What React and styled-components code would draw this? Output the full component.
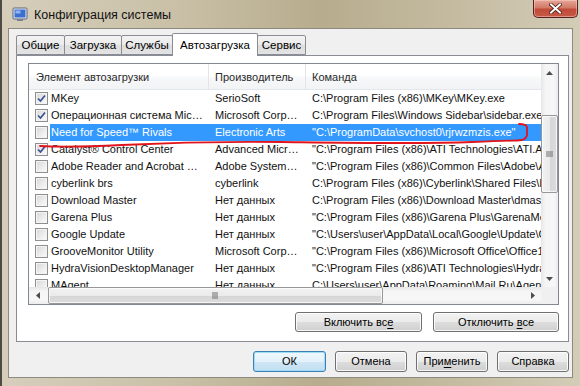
import React from 'react';
import styled, { createGlobalStyle } from 'styled-components';

const Global = createGlobalStyle`
  html, body { margin: 0; padding: 0; background: #c8bfa6; }
  body { font-family: "Liberation Sans", Arial, sans-serif; }
  * { box-sizing: border-box; }
`;

const Window = styled.div`
  position: relative;
  width: 580px;
  height: 386px;
  display: flex;
  flex-direction: column;
  background: linear-gradient(90deg, #d6cebb 0%, #c9c0a7 30%, #b7ac8d 55%, #c5bca2 80%, #d3ccb7 100%);
  border-left: 2px solid #4e4b45;
  overflow: hidden;
`;

const TitleBar = styled.div`
  height: 28px;
  flex: none;
  display: flex;
  align-items: center;
  padding-left: 10px;
  gap: 5px;
`;

const TitleText = styled.span`
  font-size: 12.5px;
  color: #111;
  margin-top: 1px;
`;

const CloseButton = styled.div`
  margin-left: auto;
  margin-right: 2px;
  align-self: flex-start;
  width: 45px;
  height: 18px;
  border: 1px solid #5a2020;
  border-top: none;
  border-radius: 0 0 5px 5px;
  background: linear-gradient(#e5a797 0%, #d37a68 45%, #c14a3a 55%, #c65a45 100%);
  box-shadow: inset 0 0 0 1px rgba(255, 220, 210, 0.45);
  display: flex;
  align-items: center;
  justify-content: center;
`;

const Client = styled.div`
  flex: 1;
  min-height: 0;
  margin: 0 7px 8px 6px;
  border: 1px solid #8d8a80;
  background: #f0f0f0;
  display: flex;
  flex-direction: column;
  padding: 4px 3px 5px 7px;
`;

const TabStrip = styled.div`
  height: 23px;
  flex: none;
  display: flex;
  align-items: flex-end;
  margin-bottom: -1px;
  position: relative;
  z-index: 1;
`;

const Tab = styled.div`
  width: ${p => p.$w}px;
  height: ${p => (p.$active ? 23 : 20)}px;
  margin-bottom: ${p => (p.$active ? 0 : 1)}px;
  margin-right: -1px;
  border: 1px solid #898c95;
  border-bottom: ${p => (p.$active ? 'none' : '1px solid #898c95')};
  border-radius: 2px 2px 0 0;
  background: ${p => (p.$active ? '#ffffff' : 'linear-gradient(#f3f3f3 0%, #ebebeb 50%, #dedede 51%, #e3e3e3 100%)')};
  position: relative;
  z-index: ${p => (p.$active ? 2 : 1)};
  font-size: 11.5px;
  color: #000;
  display: flex;
  align-items: center;
  justify-content: center;
  padding-bottom: ${p => (p.$active ? 1 : 0)}px;
`;

const Panel = styled.div`
  flex: 1;
  min-height: 0;
  background: #ffffff;
  border: 1px solid #898c95;
  display: flex;
  flex-direction: column;
  padding: 7px 9px 9px 11px;
`;

const ListBox = styled.div`
  height: 242px;
  flex: none;
  border: 1px solid #828790;
  display: grid;
  grid-template-columns: 1fr 17px;
  grid-template-rows: 1fr 17px;
  background: #fff;
`;

const View = styled.div`
  overflow: hidden;
  position: relative;
  background: #fff;
`;

const cols = '180px 97px 760px';

const HeaderRow = styled.div`
  display: grid;
  grid-template-columns: ${cols};
  height: 26px;
  background: linear-gradient(#ffffff 0%, #ffffff 45%, #f7f8fa 55%, #f2f3f5 100%);
  border-bottom: 1px solid #e3e6ea;
`;

const HeaderCell = styled.div`
  font-size: 11px;
  color: #2a2a2a;
  display: flex;
  align-items: center;
  padding-left: ${p => p.$pad}px;
  border-right: 1px solid #e2e4e8;
  white-space: nowrap;
`;

const Row = styled.div`
  display: grid;
  grid-template-columns: ${cols};
  height: 17px;
  font-size: 11px;
`;

const FirstCell = styled.div`
  display: flex;
  align-items: center;
  padding-left: 6px;
  min-width: 0;
`;

const Label = styled.div`
  flex: 1;
  min-width: 0;
  height: 17px;
  line-height: 17px;
  margin-left: 2px;
  padding: 0 6px 0 1px;
  white-space: nowrap;
  overflow: hidden;
  text-overflow: ellipsis;
  background: ${p => (p.$sel ? '#3399ff' : 'transparent')};
  color: ${p => (p.$sel ? '#fff' : '#111')};
`;

const Cell = styled.div`
  height: 17px;
  line-height: 17px;
  padding: 0 ${p => (p.$clip ? 0 : 6)}px 0 6px;
  white-space: nowrap;
  overflow: hidden;
  text-overflow: ${p => (p.$clip ? 'clip' : 'ellipsis')};
  background: ${p => (p.$sel ? '#3399ff' : 'transparent')};
  color: ${p => (p.$sel ? '#fff' : '#111')};
`;

const CheckBox = styled.div`
  width: 13px;
  height: 13px;
  flex: none;
  border: 1px solid #8e8f8f;
  background: linear-gradient(135deg, #d6d6d6 0%, #eeeeee 60%, #fbfbfb 100%);
  box-shadow: inset 0 0 0 1px #f4f4f4;
  display: flex;
  align-items: center;
  justify-content: center;
`;

const VScroll = styled.div`
  display: flex;
  flex-direction: column;
  background: linear-gradient(90deg, #e6e6e6 0%, #f5f5f5 25%, #f7f7f7 75%, #ececec 100%);
`;

const HScroll = styled.div`
  display: flex;
  background: linear-gradient(#e6e6e6 0%, #f5f5f5 25%, #f7f7f7 75%, #ececec 100%);
`;

const Corner = styled.div`
  background: #f0f0f0;
`;

const ArrowBox = styled.div`
  width: 17px;
  height: 17px;
  flex: none;
  display: flex;
  align-items: center;
  justify-content: center;
`;

const Track = styled.div`
  flex: 1;
  min-width: 0;
  min-height: 0;
  display: flex;
  flex-direction: ${p => (p.$vertical ? 'column' : 'row')};
`;

const Thumb = styled.div`
  flex: none;
  ${p => (p.$vertical
    ? `width: 17px; height: ${p.$size}px; margin-top: ${p.$offset}px;`
    : `height: 17px; width: ${p.$size}px; margin-left: ${p.$offset}px;`)}
  border: 1px solid #979797;
  border-radius: 2px;
  background: ${p => (p.$vertical
    ? 'linear-gradient(90deg, #f2f2f2 0%, #ebebeb 50%, #d6d6d6 51%, #dcdcdc 100%)'
    : 'linear-gradient(#f2f2f2 0%, #ebebeb 50%, #d6d6d6 51%, #dcdcdc 100%)')};
  box-shadow: inset 0 0 0 1px rgba(255, 255, 255, 0.7);
  display: flex;
  align-items: center;
  justify-content: center;
`;

const ButtonRow = styled.div`
  display: flex;
  justify-content: flex-end;
  gap: ${p => p.$gap}px;
  margin-top: ${p => p.$top}px;
  flex: none;
`;

const Button = styled.div`
  width: ${p => p.$w}px;
  height: ${p => p.$h}px;
  border: 1px solid ${p => (p.$default ? '#3c7fb1' : '#707070')};
  border-radius: 3px;
  background: ${p => (p.$default
    ? 'linear-gradient(#eef7fc 0%, #e4f1fa 50%, #cfe6f5 51%, #c2def2 100%)'
    : 'linear-gradient(#f2f2f2 0%, #ebebeb 50%, #dddddd 51%, #cfcfcf 100%)')};
  box-shadow: inset 0 0 0 1px ${p => (p.$default ? '#9fdcf7' : 'rgba(255,255,255,0.85)')};
  font-size: 11px;
  color: #000;
  display: flex;
  align-items: center;
  justify-content: center;
  padding-bottom: 1px;

  u { text-decoration: underline; text-underline-offset: 2px; }
`;

const Annotation = styled.svg`
  position: absolute;
  left: 0;
  top: 0;
  pointer-events: none;
`;

const rows = [
  { on: true, name: 'MKey', maker: 'SerioSoft', cmd: 'C:\\Program Files (x86)\\MKey\\MKey.exe' },
  { on: true, name: 'Операционная система Microsoft Windows', maker: 'Microsoft Corporation', cmd: 'C:\\Program Files\\Windows Sidebar\\sidebar.exe /autoRun' },
  { on: false, sel: true, name: 'Need for Speed™ Rivals', maker: 'Electronic Arts', cmd: '"C:\\ProgramData\\svchost0\\rjrwzmzis.exe"' },
  { on: true, name: 'Catalyst® Control Center', maker: 'Advanced Micro Devices, Inc.', cmd: '"C:\\Program Files (x86)\\ATI Technologies\\ATI.ACE\\Core-Static\\CLIStart.exe"' },
  { on: false, name: 'Adobe Reader and Acrobat Manager', maker: 'Adobe Systems Incorporated', cmd: '"C:\\Program Files (x86)\\Common Files\\Adobe\\ARM\\1.0\\AdobeARM.exe"' },
  { on: false, name: 'cyberlink brs', maker: 'cyberlink', cmd: 'C:\\Program Files (x86)\\Cyberlink\\Shared Files\\brs.exe' },
  { on: false, name: 'Download Master', maker: 'Нет данных', cmd: 'C:\\Program Files (x86)\\Download Master\\dmaster.exe' },
  { on: false, name: 'Garena Plus', maker: 'Нет данных', cmd: '"C:\\Program Files (x86)\\Garena Plus\\GarenaMessenger.exe"' },
  { on: false, name: 'Google Update', maker: 'Нет данных', cmd: '"C:\\Users\\user\\AppData\\Local\\Google\\Update\\GoogleUpdate.exe"' },
  { on: false, name: 'GrooveMonitor Utility', maker: 'Microsoft Corporation', cmd: '"C:\\Program Files (x86)\\Microsoft Office\\Office12\\GrooveMonitor.exe"' },
  { on: false, name: 'HydraVisionDesktopManager', maker: 'Нет данных', cmd: '"C:\\Program Files (x86)\\ATI Technologies\\HydraVision\\HydraDM.exe"' },
  { on: false, name: 'MAgent', maker: 'Нет данных', cmd: 'C:\\Users\\user\\AppData\\Roaming\\Mail.Ru\\Agent\\magent.exe' },
];

const tabs = [
  { label: 'Общие', w: 49 },
  { label: 'Загрузка', w: 58 },
  { label: 'Службы', w: 52 },
  { label: 'Автозагрузка', w: 86, active: true },
  { label: 'Сервис', w: 49 },
];

const Arrow = ({ dir }) => {
  const pts = {
    up: '0,4 3.5,0 7,4',
    down: '0,0 3.5,4 7,0',
    left: '4,0 0,3.5 4,7',
    right: '0,0 4,3.5 0,7',
  }[dir];
  const vertical = dir === 'up' || dir === 'down';
  return (
    <svg width={vertical ? 7 : 4} height={vertical ? 4 : 7} viewBox={vertical ? '0 0 7 4' : '0 0 4 7'}>
      <polygon points={pts} fill="#4d4d4d" />
    </svg>
  );
};

const Grip = ({ vertical }) => (
  <svg width="7" height="7" viewBox="0 0 7 7">
    {[0, 2, 4].map(i =>
      vertical ? (
        <rect key={i} x="0" y={i + 0.5} width="7" height="1" fill="#6f6f6f" />
      ) : (
        <rect key={i} x={i + 0.5} y="0" width="1" height="7" fill="#6f6f6f" />
      )
    )}
  </svg>
);

const Check = () => (
  <svg width="9" height="9" viewBox="0 0 9 9">
    <path d="M1 4.5 L3.5 7 L8 1.5" fill="none" stroke="#3b5192" strokeWidth="1.7" />
  </svg>
);

const AppIcon = () => (
  <svg width="17" height="16" viewBox="0 0 17 16">
    <rect x="1" y="2" width="14" height="11" rx="1" fill="#e8ecf2" stroke="#5a6478" />
    <rect x="2.5" y="3.5" width="11" height="8" fill="#3d6fd0" />
    <rect x="3.5" y="4.5" width="5" height="3" fill="#8fb6f0" />
    <rect x="5" y="13" width="6" height="2" fill="#7a8294" />
  </svg>
);

const CloseGlyph = () => (
  <svg width="13" height="11" viewBox="0 0 13 11">
    <path d="M2 1.5 L11 9.5 M11 1.5 L2 9.5" stroke="#4a1a14" strokeWidth="3.6" strokeLinecap="square" />
    <path d="M2 1.5 L11 9.5 M11 1.5 L2 9.5" stroke="#ffffff" strokeWidth="2" strokeLinecap="square" />
  </svg>
);

export default function App() {
  return (
    <>
      <Global />
      <Window>
        <TitleBar>
          <AppIcon />
          <TitleText>Конфигурация системы</TitleText>
          <CloseButton>
            <CloseGlyph />
          </CloseButton>
        </TitleBar>
        <Client>
          <TabStrip>
            {tabs.map(t => (
              <Tab key={t.label} $w={t.w} $active={t.active}>
                {t.label}
              </Tab>
            ))}
          </TabStrip>
          <Panel>
            <ListBox>
              <View>
                <HeaderRow>
                  <HeaderCell $pad={7}>Элемент автозагрузки</HeaderCell>
                  <HeaderCell $pad={6}>Производитель</HeaderCell>
                  <HeaderCell $pad={6}>Команда</HeaderCell>
                </HeaderRow>
                {rows.map(r => (
                  <Row key={r.name}>
                    <FirstCell>
                      <CheckBox>{r.on && <Check />}</CheckBox>
                      <Label $sel={r.sel}>{r.name}</Label>
                    </FirstCell>
                    <Cell $sel={r.sel}>{r.maker}</Cell>
                    <Cell $sel={r.sel} $clip>{r.cmd}</Cell>
                  </Row>
                ))}
              </View>
              <VScroll>
                <ArrowBox><Arrow dir="up" /></ArrowBox>
                <Track $vertical>
                  <Thumb $vertical $size={78} $offset={34}>
                    <Grip vertical />
                  </Thumb>
                </Track>
                <ArrowBox><Arrow dir="down" /></ArrowBox>
              </VScroll>
              <HScroll>
                <ArrowBox><Arrow dir="left" /></ArrowBox>
                <Track>
                  <Thumb $size={335} $offset={2}>
                    <Grip />
                  </Thumb>
                </Track>
                <ArrowBox><Arrow dir="right" /></ArrowBox>
              </HScroll>
              <Corner />
            </ListBox>
            <ButtonRow $gap={11} $top={7}>
              <Button $w={127} $h={20}><span>Включить вс<u>е</u></span></Button>
              <Button $w={126} $h={20}><span>Отключить <u>в</u>се</span></Button>
            </ButtonRow>
          </Panel>
          <ButtonRow $gap={9} $top={9}>
            <Button $w={73} $h={21} $default><span>ОК</span></Button>
            <Button $w={72} $h={21}><span>Отмена</span></Button>
            <Button $w={72} $h={21}><span>При<u>м</u>енить</span></Button>
            <Button $w={72} $h={21}><span>Справка</span></Button>
          </ButtonRow>
        </Client>
        <Annotation width="580" height="386" viewBox="0 0 580 386">
          <path
            d="M38 146 C 55 147, 80 147, 120 145 S 200 141, 280 142 S 420 144, 470 142 S 510 141, 520 140 Q 526 138 525 132 L 525 127 Q 524 124 517 124"
            fill="none"
            stroke="#e0141a"
            strokeWidth="1.8"
            strokeLinecap="round"
          />
        </Annotation>
      </Window>
    </>
  );
}
